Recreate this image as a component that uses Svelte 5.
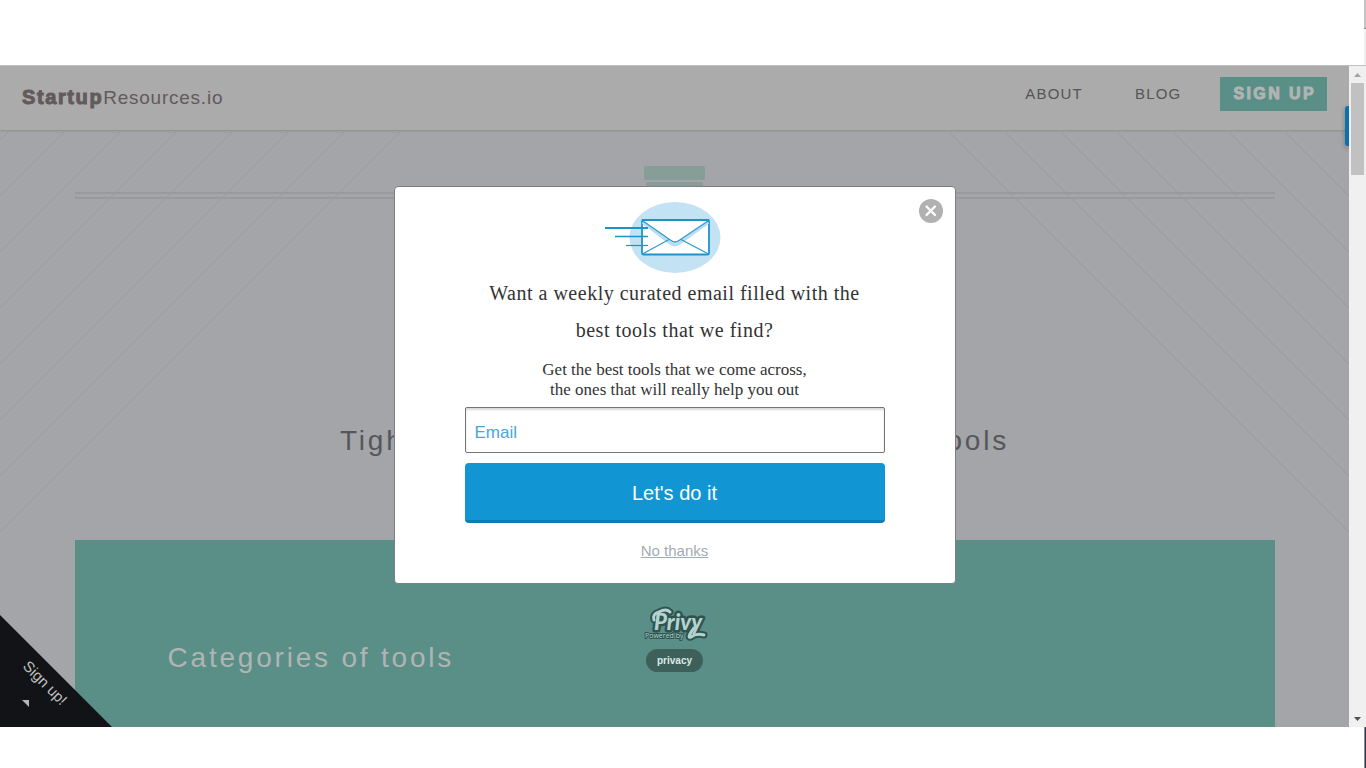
<script lang="ts">
  let email = $state('');

  // Where each diagonal starts along the top edge of the hero
  const stripes = [10, 66, 122, 178, 234, 290, 346, 402];
</script>

{#snippet diagonals(side: string)}
  <svg class="diagonals {side}" width="403" height="403" viewBox="0 0 403 403" aria-hidden="true">
    {#each stripes as x (x)}
      <line x1={x} y1="0" x2="0" y2={x} />
    {/each}
  </svg>
{/snippet}

<div class="screen">
  <div class="strip top"><span class="edge"></span></div>

  <div class="window">
    <div class="site">
      <header>
        <a class="brand" href="#home"><b>Startup</b>Resources.io</a>
        <nav>
          <a href="#about">ABOUT</a>
          <a href="#blog">BLOG</a>
          <a class="cta" href="#signup">SIGN UP</a>
        </nav>
      </header>

      <main>
        {@render diagonals('left')}
        {@render diagonals('right')}
        <section class="hero">
          <div class="rule">
            <div class="shelf"><i></i><i></i></div>
          </div>
          <h1>Tightly curated lists of the best startup tools</h1>
        </section>
        <section class="categories">
          <h2>Categories of tools</h2>
        </section>
      </main>

      <a class="corner" href="#signup">
        <span>Sign up!</span>
        <svg width="7" height="7" viewBox="0 0 7 7" aria-hidden="true"><path d="M0 0H7V7Z" fill="#b5b5b5" /></svg>
      </a>
      <div class="share"></div>

      <div class="overlay">
        <div class="modal" role="dialog" aria-labelledby="offer">
          <button class="close" type="button" aria-label="Close">
            <svg width="24" height="24" viewBox="0 0 24 24">
              <circle cx="12" cy="12" r="12" fill="#b1b1b1" />
              <path d="M7.5 7.5L16 16M16 7.5L7.5 16" stroke="#fff" stroke-width="2.2" stroke-linecap="round" />
            </svg>
          </button>

          <svg class="mail" width="150" height="73" viewBox="0 0 150 73" aria-hidden="true">
            <ellipse cx="75" cy="35.5" rx="45.5" ry="35.5" fill="#c3e2f3" />
            <rect x="42" y="18" width="67" height="34.5" rx="1.5" fill="#fff" stroke="#1b95c9" stroke-width="1.8" />
            <path d="M43 20L71 41Q75 44 79 41L108 20" fill="none" stroke="#b9dcf0" stroke-width="4" />
            <path d="M43 19L71 39.5Q75 42.5 79 39.5L108 19Z" fill="#fff" />
            <path d="M43 19L71 38.5Q75 41.5 79 38.5L108 19M42.5 52L69 37.5M108.5 52L81 37.5" fill="none" stroke="#2b9bd0" stroke-width="1.3" />
            <path d="M42 18H109" stroke="#1b95c9" stroke-width="2" />
            <path d="M5 26H48" stroke="#1b95c9" stroke-width="2" />
            <path d="M15 34.5H48" stroke="#1b95c9" stroke-width="1.5" />
            <path d="M26 43.5H48" stroke="#1b95c9" stroke-width="1.2" />
          </svg>

          <h3 id="offer">Want a weekly curated email filled with the best tools that we find?</h3>
          <p>Get the best tools that we come across,<br />the ones that will really help you out</p>

          <form onsubmit={(e) => e.preventDefault()}>
            <input type="email" placeholder="Email" aria-label="Email" bind:value={email} />
            <button class="submit" type="submit">Let's do it</button>
          </form>
          <a class="decline" href="#close">No thanks</a>
        </div>

        <a class="privy" href="#privy" aria-label="Powered by Privy">
          <svg width="66" height="36" viewBox="0 0 66 36">
            <g class="halo">
              <path d="M52 22Q44 33 49 31Q54 27 62 29" />
              <path d="M12 14Q10 8 17 6Q24 2 28 6" />
            </g>
            <text class="name" x="12" y="24">Privy</text>
            <g class="ink">
              <path d="M52 22Q44 33 49 31Q54 27 62 29" />
              <path d="M12 14Q10 8 17 6Q24 2 28 6" />
            </g>
            <text class="powered" x="3" y="32">Powered by</text>
          </svg>
        </a>
        <a class="privacy" href="#privacy">privacy</a>
      </div>
    </div>

    <div class="scrollbar" aria-hidden="true">
      <svg width="7" height="4" viewBox="0 0 7 4"><path d="M0 4L3.5 0L7 4Z" fill="#a3a3a3" /></svg>
      <div class="thumb"></div>
      <svg width="7" height="4" viewBox="0 0 7 4"><path d="M0 0L3.5 4L7 0Z" fill="#505050" /></svg>
    </div>
  </div>

  <div class="strip bottom"><span class="edge"></span></div>
</div>

<style>
  :global(body) {
    margin: 0;
    background: #fff;
  }

  .screen {
    display: flex;
    flex-direction: column;
    min-height: 100vh;
    font-family: 'Liberation Sans', Arial, sans-serif;
  }

  .strip {
    display: flex;
    justify-content: flex-end;
    background: #fff;
  }
  .top {
    height: 65px;
    border-bottom: 1px solid #c0c0c0;
  }
  .bottom {
    height: 41px;
  }
  .edge {
    width: 2px;
    background: #f0f0f0;
  }
  .top .edge {
    background: linear-gradient(#c4c4c4 28px, #8c8c8c 28px, #8c8c8c 29px, #f0f0f0 29px);
  }
  .bottom .edge {
    background: linear-gradient(90deg, #8494a8 1px, #2c3440 1px);
  }

  .window {
    display: flex;
    flex: 1;
  }

  .site {
    position: relative;
    display: flex;
    flex: 1;
    flex-direction: column;
    overflow: hidden;
    background: #a4a5a9;
  }

  header {
    position: relative;
    display: flex;
    justify-content: space-between;
    align-items: flex-start;
    box-sizing: border-box;
    height: 64px;
    padding: 11px 22px;
    background: #ababab;
    box-shadow: 0 1px 2px rgba(0, 0, 0, 0.15);
  }
  header a {
    text-decoration: none;
  }

  .brand {
    padding-top: 8px;
    font-size: 19px;
    line-height: 24px;
    letter-spacing: 0.04em;
    color: #625a5b;
  }
  .brand b {
    font-size: 20px;
    letter-spacing: 0.08em;
    -webkit-text-stroke: 1px #625a5b;
  }

  nav {
    display: flex;
    font-size: 15px;
    line-height: 34px;
    letter-spacing: 0.08em;
  }
  nav a {
    margin-right: 52px;
    color: #555;
  }
  nav .cta {
    margin: 0 0 0 -13px;
    padding: 0 11px 0 13px;
    font-size: 16px;
    font-weight: bold;
    letter-spacing: 0.15em;
    color: #b0b5b3;
    background: #5a8f87;
    -webkit-text-stroke: 1px #b0b5b3;
  }

  main {
    position: relative;
    display: flex;
    flex: 1;
    flex-direction: column;
  }

  .diagonals {
    position: absolute;
    top: 0;
    stroke: #999a9f;
    stroke-width: 1;
  }
  .left {
    left: 0;
  }
  .right {
    right: 0;
    transform: scaleX(-1);
  }

  .hero,
  .categories {
    position: relative;
    box-sizing: border-box;
    width: calc(100% - 149px);
    max-width: 1200px;
    margin: 0 auto;
  }
  .hero {
    height: 410px;
    padding-top: 36px;
    text-align: center;
  }

  .rule {
    display: flex;
    justify-content: center;
    height: 33px;
    background: linear-gradient(transparent 26px, #999a9e 26px, #999a9e 28px, transparent 28px, transparent 31px, #999a9e 31px);
  }
  .shelf {
    display: flex;
    flex-direction: column;
    align-items: center;
    gap: 2px;
    padding: 0 12px;
    height: 33px;
    background: #a4a5a9;
  }
  .shelf i {
    width: 61px;
    height: 14px;
    border-radius: 2px;
    background: #869d98;
  }
  .shelf i + i {
    width: 57px;
  }

  h1,
  h2 {
    margin: 0;
    font-size: 28px;
    font-weight: normal;
    line-height: 40px;
    letter-spacing: 0.1em;
  }
  h1 {
    margin-top: 222px;
    color: #56575a;
  }

  .categories {
    flex: 1;
    padding: 98px 93px 0;
    background: #5a8f87;
  }
  h2 {
    color: #b0b5b3;
  }

  .corner {
    position: absolute;
    bottom: 0;
    left: 0;
    width: 112px;
    height: 112px;
    color: #c0c0c0;
    background: #121316;
    clip-path: polygon(0 0, 100% 100%, 0 100%);
  }
  .corner span {
    position: absolute;
    top: 59px;
    left: 15px;
    width: 60px;
    font-size: 15px;
    line-height: 18px;
    text-align: center;
    transform: rotate(45deg);
  }
  .corner svg {
    position: absolute;
    bottom: 20px;
    left: 22px;
  }

  .share {
    position: absolute;
    top: 40px;
    right: 0;
    width: 4px;
    height: 40px;
    border-radius: 3px 0 0 3px;
    background: #0c70ad;
    box-shadow: 0 2px 5px rgba(0, 0, 0, 0.3);
  }

  .overlay {
    position: absolute;
    inset: 0;
    display: flex;
    flex-direction: column;
    align-items: center;
    padding-top: 120px;
  }

  .modal {
    position: relative;
    display: flex;
    flex-direction: column;
    align-items: center;
    box-sizing: border-box;
    width: 562px;
    max-width: 100%;
    padding: 15px 70px 23px;
    border: 1px solid #7d7d81;
    border-radius: 4px;
    background: #fff;
  }

  .close {
    position: absolute;
    top: 12px;
    right: 12px;
    padding: 0;
    border: 0;
    background: none;
    cursor: pointer;
  }
  .close svg,
  .privy svg {
    display: block;
  }

  h3,
  .modal p {
    margin: 0;
    font-family: 'Liberation Serif', 'Times New Roman', serif;
    text-align: center;
    color: #333;
  }
  h3 {
    width: 400px;
    font-size: 20px;
    font-weight: normal;
    line-height: 37px;
    letter-spacing: 0.025em;
  }
  .modal p {
    margin-top: 11px;
    font-size: 17px;
    line-height: 20px;
  }

  form {
    display: flex;
    flex-direction: column;
    gap: 10px;
    width: 100%;
    margin-top: 7px;
  }
  input {
    box-sizing: border-box;
    height: 46px;
    padding: 5px 9px 0;
    border: 1px solid #77727a;
    border-radius: 2px;
    font: 17px 'Liberation Sans', Arial, sans-serif;
    color: #1196d3;
    box-shadow: inset 0 2px 2px rgba(0, 0, 0, 0.15);
  }
  input::placeholder {
    color: #4aa6d6;
    opacity: 1;
  }
  .submit {
    height: 60px;
    padding: 3px 0 0;
    border: 0;
    border-bottom: 3px solid #0e7cb0;
    border-radius: 4px;
    font: 20px 'Liberation Sans', Arial, sans-serif;
    color: #fff;
    background: #1196d3;
    cursor: pointer;
  }
  .decline {
    margin-top: 19px;
    font-size: 15px;
    line-height: 18px;
    color: #a3abb2;
  }

  .privy {
    margin-top: 22px;
  }
  .halo,
  .ink {
    fill: none;
    stroke-linecap: round;
  }
  .halo {
    stroke: #2f5450;
    stroke-width: 7;
  }
  .ink {
    stroke: #b4d3ce;
    stroke-width: 3;
  }
  .name,
  .powered {
    fill: #b4d3ce;
    stroke: #2f5450;
    stroke-linejoin: round;
    paint-order: stroke;
  }
  .name {
    font: italic 900 22px Lato, sans-serif;
    stroke-width: 5;
  }
  .powered {
    font: 7px 'Open Sans', sans-serif;
    stroke-width: 2;
  }

  .privacy {
    margin-top: 7px;
    padding: 0 11px;
    border-radius: 12px;
    font-size: 10px;
    font-weight: bold;
    line-height: 23px;
    text-decoration: none;
    color: #dfe9e7;
    background: #3d605b;
  }

  .scrollbar {
    display: flex;
    flex-direction: column;
    align-items: center;
    box-sizing: border-box;
    width: 17px;
    padding: 7px 0 6px;
    background: #f0f0f0;
  }
  .thumb {
    width: 13px;
    height: 92px;
    margin: 6px 0 auto;
    background: #c1c1c1;
  }
</style>
